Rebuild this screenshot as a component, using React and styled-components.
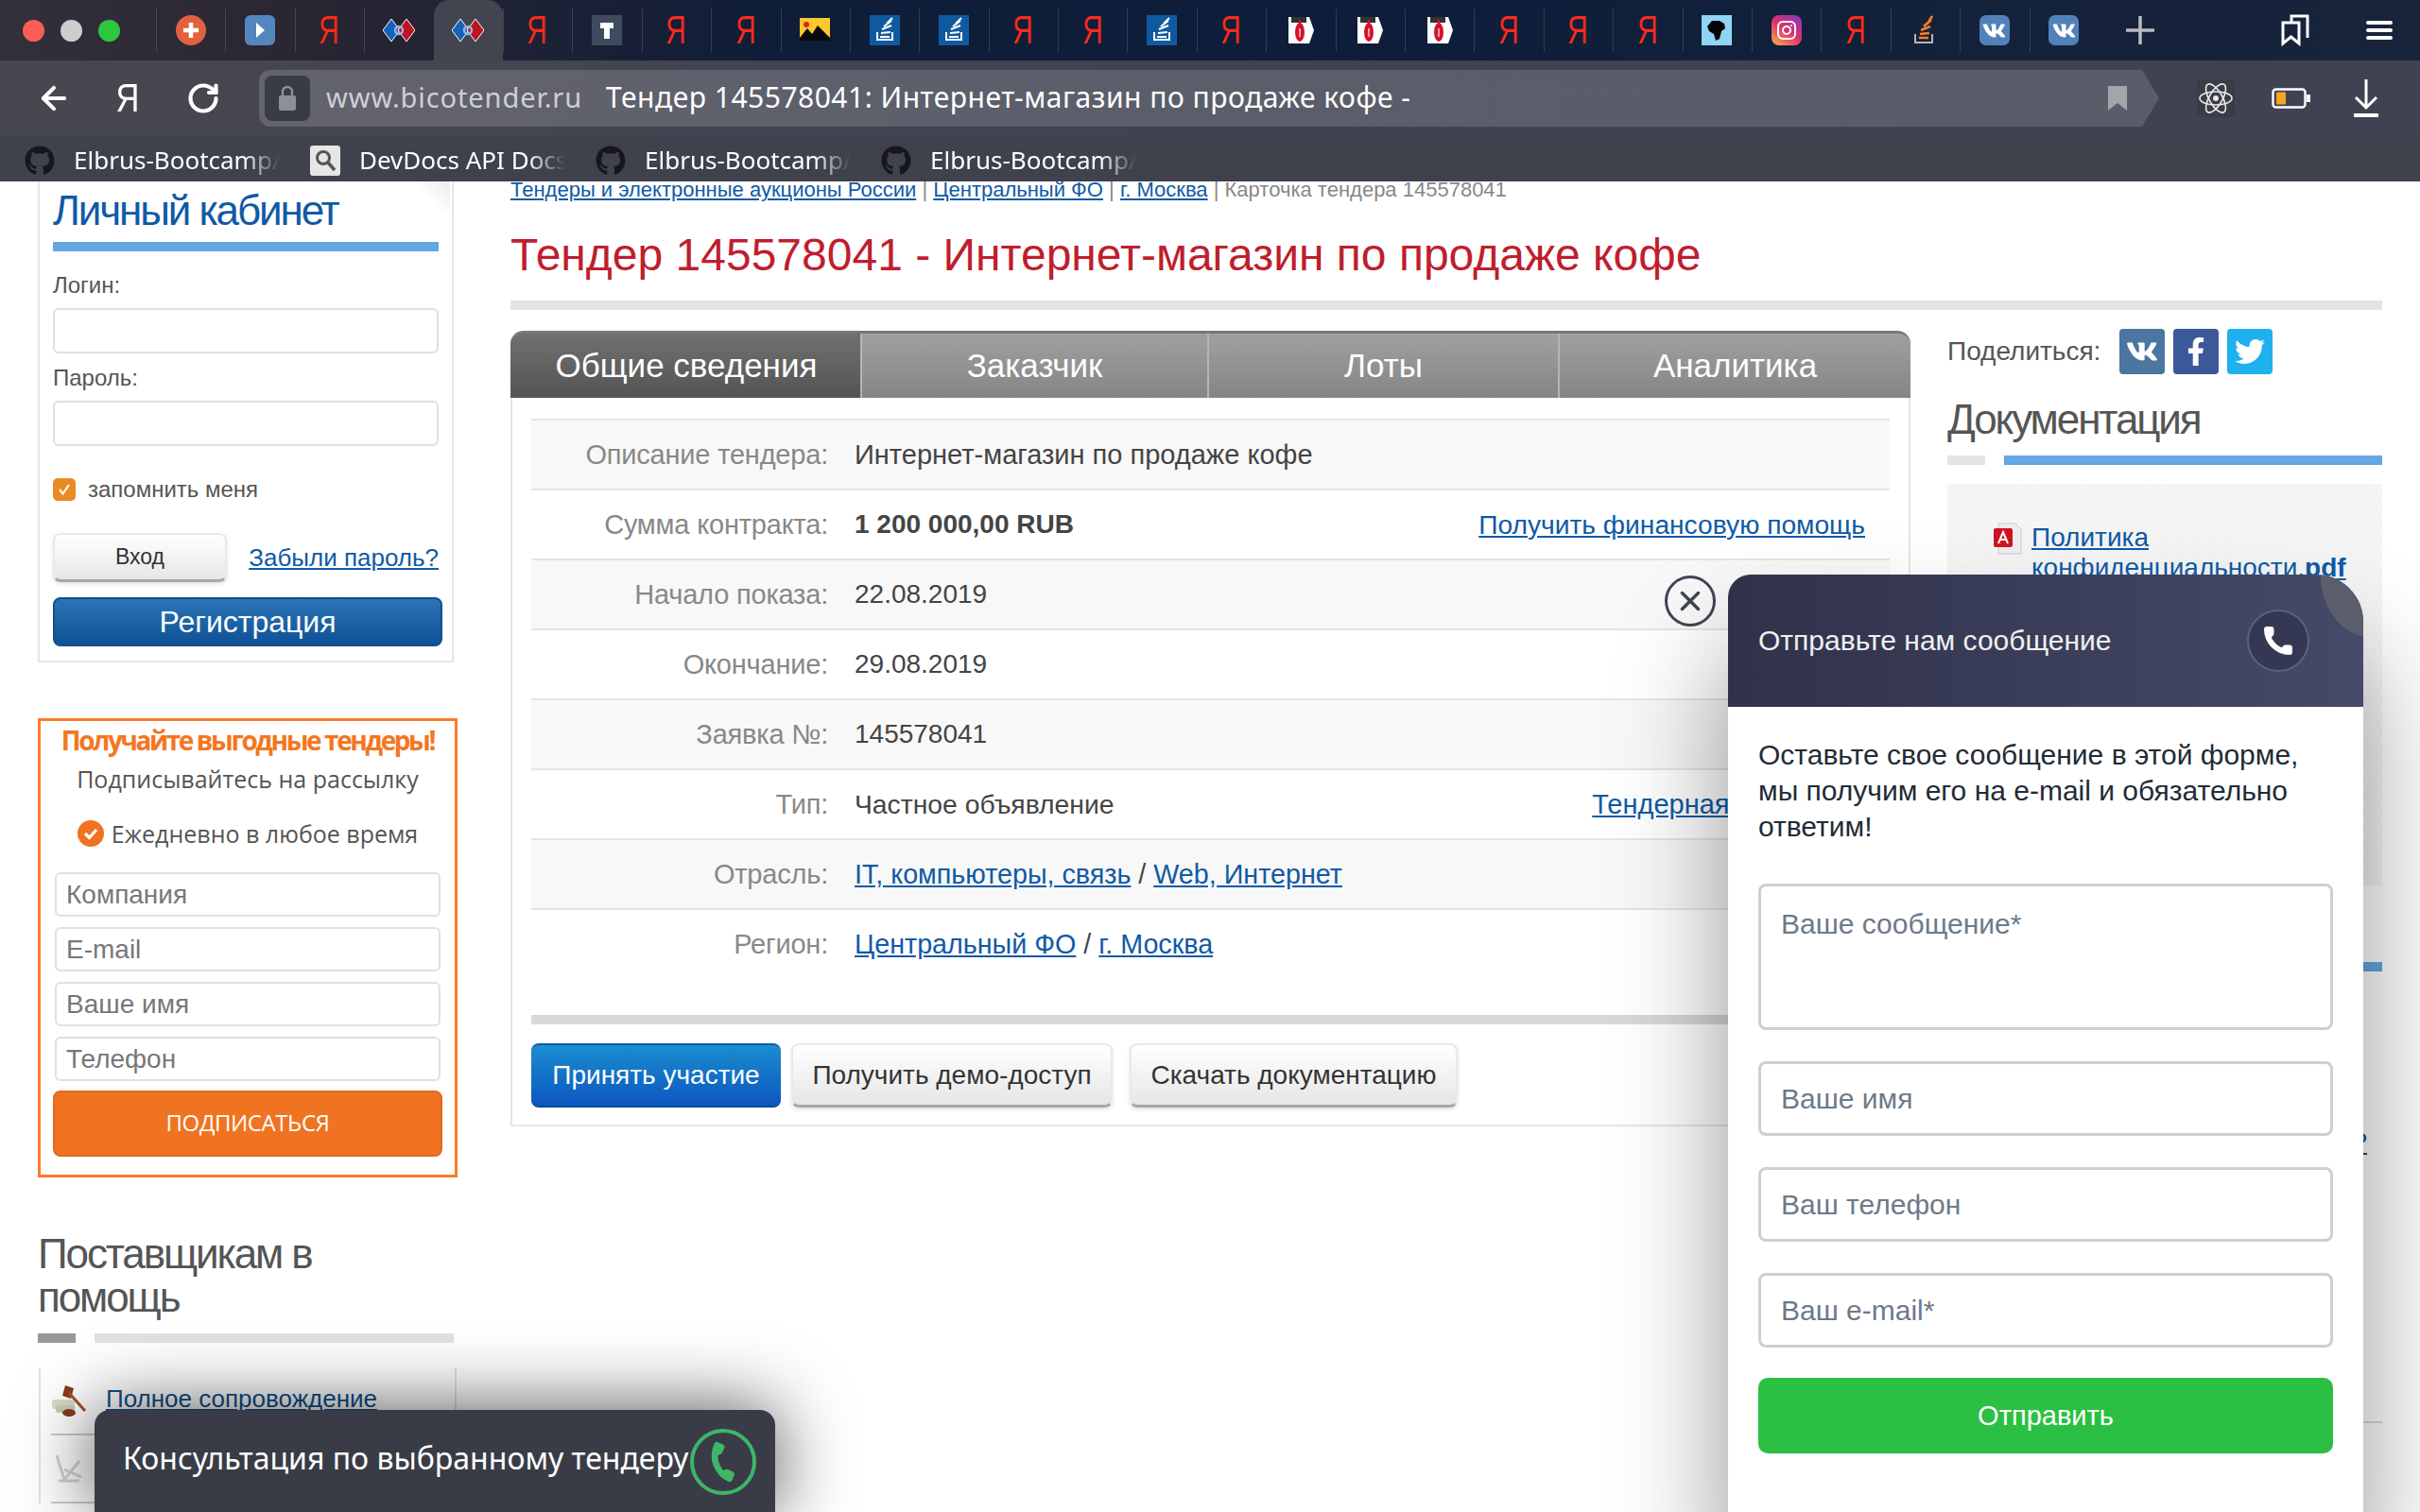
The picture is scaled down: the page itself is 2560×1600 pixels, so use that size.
import styled, { createGlobalStyle } from 'styled-components';
import { FaGithub, FaVk, FaFacebookF, FaTwitter } from 'react-icons/fa';
import { RotateCw, ArrowLeft, X, Phone } from 'lucide-react';

const GlobalStyle = createGlobalStyle`
  * { box-sizing: border-box; }
  html, body { margin: 0; padding: 0; background: #fff; }
  body { font-family: "Liberation Sans", Arial, sans-serif; color: #444; }
  a { color: #0f5aa6; }
  input::placeholder, textarea::placeholder { opacity: 1; color: inherit; }
`;

const tabIcons = [
  'plus', 'play', 'ya', 'bico', 'bico', 'ya', 'tee', 'ya', 'ya', 'photo', 'stack', 'stack', 'ya', 'ya',
  'stack', 'ya', 'pdf', 'pdf', 'pdf', 'ya', 'ya', 'ya', 'bird', 'insta', 'ya', 'so', 'vk', 'vk',
];

const bookmarks = [
  { icon: 'gh', label: 'Elbrus-Bootcamp/' },
  { icon: 'docs', label: 'DevDocs API Docs' },
  { icon: 'gh', label: 'Elbrus-Bootcamp/' },
  { icon: 'gh', label: 'Elbrus-Bootcamp/' },
];

const contentTabs = ['Общие сведения', 'Заказчик', 'Лоты', 'Аналитика'];

const App = () => (
  <Screen>
    <GlobalStyle />
    <BrowserChrome />
    <Viewport>
      <Page>
        <Sidebar />
        <MainColumn>
          <Breadcrumbs>
            <a href="#a">Тендеры и электронные аукционы России</a> <i>|</i> <a href="#a">Центральный ФО</a> <i>|</i>{' '}
            <a href="#a">г. Москва</a> <i>|</i> Карточка тендера 145578041
          </Breadcrumbs>
          <PageTitle>Тендер 145578041 - Интернет-магазин по продаже кофе</PageTitle>
          <TitleBar />
          <ContentRow>
            <TenderPanel />
            <RightColumn />
          </ContentRow>
        </MainColumn>
      </Page>
      <ConsultBar>
        <span>Консультация по выбранному тендеру</span>
        <ConsultPhone>
          <Phone size={40} fill="currentColor" strokeWidth={0} />
        </ConsultPhone>
      </ConsultBar>
      <CloseButton>
        <X size={34} strokeWidth={2.4} />
      </CloseButton>
      <MessagePopup />
    </Viewport>
  </Screen>
);

const BrowserChrome = () => (
  <Chrome>
    <TabStrip>
      <Lights>
        <Light $color="#fc5c57" />
        <Light $color="#cdcdcd" />
        <Light $color="#2cc73f" />
      </Lights>
      {tabIcons.map((kind, i) => (
        <BrowserTab key={i} $active={i === 4}>
          <Favicon kind={kind} />
        </BrowserTab>
      ))}
      <NewTab>
        <svg width="30" height="30" viewBox="0 0 30 30">
          <path d="M15 1v28M1 15h28" stroke="#b9bcc2" strokeWidth="3.5" strokeLinecap="round" />
        </svg>
      </NewTab>
      <StripRight>
        <svg width="30" height="34" viewBox="0 0 30 34" fill="none" stroke="#fff" strokeWidth="3">
          <path d="M11 9V2h17v23" />
          <path d="M2 9h17v22l-8.5-7L2 31z" />
        </svg>
        <MenuBars>
          <b />
          <b />
          <b />
        </MenuBars>
      </StripRight>
    </TabStrip>
    <NavBar>
      <NavButton>
        <ArrowLeft size={38} color="#fff" strokeWidth={2.6} />
      </NavButton>
      <NavLetter>Я</NavLetter>
      <NavButton>
        <RotateCw size={36} color="#fff" strokeWidth={2.8} />
      </NavButton>
      <AddressBar>
        <LockBox>
          <svg width="20" height="28" viewBox="0 0 20 28">
            <path d="M5 12V7a5 5 0 0 1 10 0v5" fill="none" stroke="#8b9097" strokeWidth="2.4" />
            <rect x="1" y="11" width="18" height="16" rx="2" fill="#8b9097" />
          </svg>
        </LockBox>
        <Host>www.bicotender.ru</Host>
        <PageName>Тендер 145578041: Интернет-магазин по продаже кофе -</PageName>
        <AddressBookmark viewBox="0 0 20 26" width="20" height="26">
          <path d="M0 0h20v26l-10-8-10 8z" fill="#a3a5ab" />
        </AddressBookmark>
      </AddressBar>
      <AtomBox>
        <svg width="36" height="36" viewBox="0 0 36 36" fill="none" stroke="#e8e8ea" strokeWidth="1.6">
          <ellipse cx="18" cy="18" rx="17" ry="7" />
          <ellipse cx="18" cy="18" rx="17" ry="7" transform="rotate(60 18 18)" />
          <ellipse cx="18" cy="18" rx="17" ry="7" transform="rotate(120 18 18)" />
          <circle cx="18" cy="18" r="3" fill="#e8e8ea" stroke="none" />
        </svg>
      </AtomBox>
      <svg width="42" height="22" viewBox="0 0 42 22">
        <rect x="1.5" y="1.5" width="34" height="19" rx="3" fill="none" stroke="#fff" strokeWidth="2.4" />
        <rect x="5" y="4.5" width="10" height="13" rx="1" fill="#f5a623" />
        <rect x="37" y="7" width="4" height="8" fill="#fff" />
      </svg>
      <svg width="30" height="40" viewBox="0 0 30 40" fill="none" stroke="#fff" strokeWidth="3">
        <path d="M15 0v30M4 19l11 11 11-11" />
        <path d="M2 38h26" strokeWidth="4" />
      </svg>
    </NavBar>
    <BookmarksBar>
      {bookmarks.map((b, i) => (
        <Bookmark key={i}>
          {b.icon === 'gh' ? (
            <FaGithub size={32} color="#17171b" />
          ) : (
            <svg width="32" height="32" viewBox="0 0 32 32">
              <rect width="32" height="32" rx="3" fill="#e6e6e6" />
              <circle cx="14" cy="13" r="6.5" fill="none" stroke="#555" strokeWidth="3" />
              <path d="M19 18l7 8" stroke="#555" strokeWidth="3.5" />
            </svg>
          )}
          <BookmarkLabel>{b.label}</BookmarkLabel>
        </Bookmark>
      ))}
    </BookmarksBar>
  </Chrome>
);

const Favicon = ({ kind }) => {
  if (kind === 'ya') return <YaMark>Я</YaMark>;
  if (kind === 'plus')
    return (
      <svg width="32" height="32" viewBox="0 0 32 32">
        <circle cx="16" cy="16" r="16" fill="#e2623f" />
        <path d="M16 8v16M8 16h16" stroke="#fff" strokeWidth="4.5" />
      </svg>
    );
  if (kind === 'play')
    return (
      <svg width="32" height="32" viewBox="0 0 32 32">
        <rect width="32" height="32" rx="6" fill="#5585bd" />
        <path d="M12 8l9 8-9 8z" fill="#fff" />
      </svg>
    );
  if (kind === 'bico')
    return (
      <svg width="34" height="24" viewBox="0 0 34 24">
        <path d="M9 0l9 12-9 12-9-12z" fill="#1662b8" stroke="#fff" strokeWidth="1" />
        <path d="M25 0l9 12-9 12-9-12z" fill="#bd1424" stroke="#fff" strokeWidth="1" />
        <circle cx="17" cy="12" r="4" fill="none" stroke="#8fb7e6" strokeWidth="2.4" />
      </svg>
    );
  if (kind === 'tee')
    return (
      <svg width="32" height="32" viewBox="0 0 32 32">
        <rect width="32" height="32" fill="#3e4a5e" />
        <path d="M9 8h14v6h-4v11h-6V14H9z" fill="#fff" />
      </svg>
    );
  if (kind === 'photo')
    return (
      <svg width="32" height="32" viewBox="0 0 32 32">
        <rect y="3" width="32" height="24" fill="#fdc72e" />
        <circle cx="7" cy="10" r="3" fill="#d9241c" />
        <path d="M0 24l8-10 5 6 6-9 13 13v3H0z" fill="#0a0a0a" />
      </svg>
    );
  if (kind === 'stack')
    return (
      <svg width="32" height="32" viewBox="0 0 32 32">
        <rect width="32" height="32" fill="#0f5a9e" />
        <path d="M8 18v8h16v-8" fill="none" stroke="#fff" strokeWidth="2" />
        <path d="M11 23h10M12 19l10-1M13 15l10-4M15 12l8-6M18 9l6-6" stroke="#fff" strokeWidth="2" />
      </svg>
    );
  if (kind === 'so')
    return (
      <svg width="32" height="32" viewBox="0 0 32 32">
        <path d="M6 20v9h18v-9" fill="none" stroke="#b5b5b5" strokeWidth="2" />
        <path d="M10 24h10M11 20l10-1M12 16l10-4M15 12l8-7M19 9l5-8" stroke="#f48024" strokeWidth="2.6" />
      </svg>
    );
  if (kind === 'pdf')
    return (
      <svg width="30" height="30" viewBox="0 0 30 30">
        <path d="M2 1h22l5 14-5 14H2z" fill="#fff" />
        <path d="M5 1h16v6H5z" fill="#333" />
        <path d="M13 4h2v6h-2z" fill="#d5122a" />
        <ellipse cx="14" cy="17" rx="5" ry="10" fill="#d5122a" />
        <path d="M13 13h2v9h-2z" fill="#fff" opacity=".6" />
      </svg>
    );
  if (kind === 'bird')
    return (
      <svg width="32" height="32" viewBox="0 0 32 32">
        <rect width="32" height="32" fill="#8fd3f5" />
        <path d="M6 12l5-6 8 0 5 3 1 5-4 3-2 8-4 2-2-7-5-3z" fill="#050505" />
      </svg>
    );
  if (kind === 'insta')
    return (
      <InstaIcon>
        <svg width="22" height="22" viewBox="0 0 22 22" fill="none" stroke="#fff" strokeWidth="2">
          <rect x="2" y="2" width="18" height="18" rx="5" />
          <circle cx="11" cy="11" r="4" />
          <circle cx="16" cy="6" r="1" fill="#fff" stroke="none" />
        </svg>
      </InstaIcon>
    );
  return (
    <VkIcon>
      <FaVk size={25} color="#fff" />
    </VkIcon>
  );
};

const Sidebar = () => (
  <SideColumn>
    <LoginBox>
      <LoginTitle>Личный кабинет</LoginTitle>
      <BlueRule />
      <FieldLabel>Логин:</FieldLabel>
      <SideInput />
      <FieldLabel $gap={12}>Пароль:</FieldLabel>
      <SideInput />
      <RememberRow>
        <CheckMark>
          <svg width="14" height="14" viewBox="0 0 14 14">
            <path d="M2 7l3.5 4.5L12 2" fill="none" stroke="#fff" strokeWidth="2.2" />
          </svg>
        </CheckMark>
        запомнить меня
      </RememberRow>
      <LoginActions>
        <GreyButton $width={184} $height={52} $size={23}>
          Вход
        </GreyButton>
        <ForgotLink href="#a">Забыли пароль?</ForgotLink>
      </LoginActions>
      <RegisterButton>Регистрация</RegisterButton>
    </LoginBox>

    <SubscribeBox>
      <SubscribeTitle>Получайте выгодные тендеры!</SubscribeTitle>
      <SubscribeLine>Подписывайтесь на рассылку</SubscribeLine>
      <ScheduleLine>
        <svg width="28" height="28" viewBox="0 0 28 28">
          <circle cx="14" cy="14" r="14" fill="#f07322" />
          <path d="M8 14l4.5 4.5L20 10" fill="none" stroke="#fff" strokeWidth="3.2" />
        </svg>
        Ежедневно в любое время
      </ScheduleLine>
      <SubscribeFields>
        <SubscribeInput placeholder="Компания" />
        <SubscribeInput placeholder="E-mail" />
        <SubscribeInput placeholder="Ваше имя" />
        <SubscribeInput placeholder="Телефон" />
      </SubscribeFields>
      <SubscribeButton>ПОДПИСАТЬСЯ</SubscribeButton>
    </SubscribeBox>

    <HelpHeading>
      Поставщикам в
      <br />
      помощь
    </HelpHeading>
    <SplitRule $short="#999" $long="#e2e2e2" $gap={20} $shortWidth={40} $width={440} />
    <HelpList>
      <HelpItem>
        <svg width="38" height="34" viewBox="0 0 38 34">
          <rect x="1" y="16" width="24" height="10" rx="3" fill="#d9d9c8" />
          <rect x="5" y="22" width="20" height="8" rx="3" fill="#c9cbb8" />
          <ellipse cx="19" cy="30" rx="7" ry="4" fill="#8a3d1f" />
          <path d="M15 1l9 3-3 11-9-3z" fill="#8a3d1f" />
          <path d="M19 9l17 19" stroke="#a0522d" strokeWidth="3" />
        </svg>
        <a href="#a">Полное сопровождение</a>
      </HelpItem>
      <HelpItem>
        <svg width="38" height="34" viewBox="0 0 38 34" fill="none" stroke="#d4d4d4" strokeWidth="3">
          <path d="M6 3l8 26M14 29l16-20M14 18l18 8M8 30h22" />
        </svg>
      </HelpItem>
    </HelpList>
  </SideColumn>
);

const TenderPanel = () => (
  <Panel>
    <PanelTabs>
      {contentTabs.map((t, i) => (
        <PanelTab key={t} $active={i === 0}>
          {t}
        </PanelTab>
      ))}
    </PanelTabs>
    <PanelBody>
      <InfoRow label="Описание тендера:" shade>
        Интернет-магазин по продаже кофе
      </InfoRow>
      <InfoRow label="Сумма контракта:" aside="Получить финансовую помощь" asideSize={28.2} valueSize={28}>
        <strong>1 200 000,00 RUB</strong>
      </InfoRow>
      <InfoRow label="Начало показа:" shade valueSize={28}>
        22.08.2019
      </InfoRow>
      <InfoRow label="Окончание:" valueSize={28}>
        29.08.2019
      </InfoRow>
      <InfoRow label="Заявка №:" shade valueSize={28}>
        145578041
      </InfoRow>
      <InfoRow label="Тип:" aside="Тендерная площадка" asideSize={29} valueSize={28.3}>
        Частное объявление
      </InfoRow>
      <InfoRow label="Отрасль:" shade valueSize={28.7}>
        <a href="#a">IT, компьютеры, связь</a> / <a href="#a">Web, Интернет</a>
      </InfoRow>
      <InfoRow label="Регион:" valueSize={28.7}>
        <a href="#a">Центральный ФО</a> / <a href="#a">г. Москва</a>
      </InfoRow>
      <ThickRule />
      <PanelActions>
        <BlueButton>Принять участие</BlueButton>
        <GreyButton $width={340} $height={68} $size={28}>
          Получить демо-доступ
        </GreyButton>
        <GreyButton $width={347} $height={68} $size={28} $gap={7}>
          Скачать документацию
        </GreyButton>
      </PanelActions>
    </PanelBody>
  </Panel>
);

const InfoRow = ({ label, aside, asideSize, valueSize = 29, shade, children }) => (
  <RowBox $shade={shade}>
    <RowLabel>{label}</RowLabel>
    <RowValue $size={valueSize}>{children}</RowValue>
    {aside && (
      <RowAside href="#a" $size={asideSize}>
        {aside}
      </RowAside>
    )}
  </RowBox>
);

const RightColumn = () => (
  <SideDocs>
    <ShareRow>
      <span>Поделиться:</span>
      <ShareIcons>
        <ShareIcon $color="#4a76a0">
          <FaVk size={34} />
        </ShareIcon>
        <ShareIcon $color="#3b5998">
          <FaFacebookF size={30} />
        </ShareIcon>
        <ShareIcon $color="#1fb0ee">
          <FaTwitter size={32} />
        </ShareIcon>
      </ShareIcons>
    </ShareRow>
    <DocsHeading>Документация</DocsHeading>
    <SplitRule $short="#e3e3e3" $long="#65a6e4" $gap={20} $shortWidth={40} />
    <DocsBox>
      <PdfIcon>
        <svg width="32" height="34" viewBox="0 0 32 34">
          <path d="M6 1h18l6 6v26H6z" fill="#eee" stroke="#ccc" />
          <rect x="1" y="6" width="20" height="20" rx="2" fill="#cf1322" />
          <path d="M6 22l5-12 5 12M8 18h6" fill="none" stroke="#fff" strokeWidth="2" />
        </svg>
      </PdfIcon>
      <DocLink href="#a">
        Политика конфиденциальности.<b>pdf</b>
      </DocLink>
    </DocsBox>
    <SplitRule $short="#e3e3e3" $long="#65a6e4" $gap={20} $shortWidth={40} $top={81} />
    <TrailingLink href="#a">?</TrailingLink>
    <TrailingRule />
  </SideDocs>
);

const MessagePopup = () => (
  <Popup>
    <PopupHeader>
      <PopupCorner />
      <span>Отправьте нам сообщение</span>
      <PopupPhone>
        <Phone size={36} fill="currentColor" strokeWidth={0} />
      </PopupPhone>
    </PopupHeader>
    <PopupBody>
      <PopupIntro>
        Оставьте свое сообщение в этой форме,
        <br />
        мы получим его на e-mail и обязательно
        <br />
        ответим!
      </PopupIntro>
      <PopupTextarea placeholder="Ваше сообщение*" />
      <PopupInput placeholder="Ваше имя" />
      <PopupInput placeholder="Ваш телефон" />
      <PopupInput placeholder="Ваш e-mail*" />
      <SendButton>Отправить</SendButton>
    </PopupBody>
  </Popup>
);

export default App;

const Screen = styled.div`
  width: 2560px;
  height: 1600px;
  display: flex;
  flex-direction: column;
  overflow: hidden;
  background: #fff;
`;

const Chrome = styled.header`
  flex: 0 0 192px;
  display: flex;
  flex-direction: column;
  position: relative;
  z-index: 5;
`;

const TabStrip = styled.div`
  height: 64px;
  display: flex;
  align-items: stretch;
  background: linear-gradient(90deg, #33303a 0%, #2a2632 12%, #0f1d38 32%, #0e1e3a 60%, #18243a 100%);
`;

const Lights = styled.div`
  width: 165px;
  padding-left: 24px;
  display: flex;
  align-items: center;
  gap: 17px;
`;

const Light = styled.span`
  width: 23px;
  height: 23px;
  border-radius: 50%;
  background: ${(p) => p.$color};
`;

const BrowserTab = styled.div`
  flex: 0 0 73.4px;
  display: flex;
  align-items: center;
  justify-content: center;
  position: relative;
  border-radius: ${(p) => (p.$active ? '16px 16px 0 0' : '0')};
  background: ${(p) => (p.$active ? '#42444f' : 'transparent')};
  &::before {
    content: '';
    position: absolute;
    left: 0;
    top: 9px;
    bottom: 9px;
    width: 1px;
    background: rgba(255, 255, 255, ${(p) => (p.$active ? 0 : 0.14)});
  }
`;

const NewTab = styled.div`
  flex: 0 0 88px;
  display: flex;
  align-items: center;
  justify-content: center;
`;

const StripRight = styled.div`
  margin-left: auto;
  display: flex;
  align-items: center;
  gap: 60px;
  padding-right: 29px;
`;

const MenuBars = styled.div`
  display: flex;
  flex-direction: column;
  gap: 4px;
  b {
    display: block;
    width: 28px;
    height: 4px;
    border-radius: 2px;
    background: #fff;
  }
`;

const YaMark = styled.span`
  display: inline-block;
  font-size: 42px;
  line-height: 1;
  color: #fc2a1c;
  transform: scaleX(0.72);
`;

const InstaIcon = styled.div`
  width: 32px;
  height: 32px;
  border-radius: 8px;
  display: flex;
  align-items: center;
  justify-content: center;
  background: linear-gradient(35deg, #fcb045 0%, #e1306c 50%, #7d3ac1 100%);
`;

const VkIcon = styled.div`
  width: 32px;
  height: 32px;
  border-radius: 7px;
  display: flex;
  align-items: center;
  justify-content: center;
  background: #5181b8;
`;

const NavBar = styled.div`
  height: 80px;
  display: flex;
  align-items: center;
  padding: 0 40px 0 38px;
  background: linear-gradient(90deg, #47474f 0%, #3e4352 50%, #3f4351 100%);
  > svg:nth-last-child(2) {
    margin-left: 39px;
  }
  > svg:last-child {
    margin-left: 43px;
  }
`;

const NavButton = styled.div`
  width: 38px;
  display: flex;
  justify-content: center;
`;

const NavLetter = styled.span`
  display: inline-block;
  width: 40px;
  margin: 0 41px 0 39px;
  text-align: center;
  font-size: 42px;
  color: #fff;
  transform: scaleX(0.82);
`;

const AddressBar = styled.div`
  width: 2010px;
  height: 60px;
  margin-left: 40px;
  display: flex;
  align-items: center;
  padding-left: 6px;
  border-radius: 12px 0 0 12px;
  clip-path: polygon(0 0, calc(100% - 18px) 0, 100% 50%, calc(100% - 18px) 100%, 0 100%);
  background: linear-gradient(90deg, #63636e 0%, #5a5e6a 50%, #5a5d69 100%);
  font-family: "Noto Sans", sans-serif;
  font-size: 29px;
  white-space: nowrap;
`;

const LockBox = styled.div`
  width: 48px;
  height: 48px;
  border-radius: 8px;
  background: #393c46;
  display: flex;
  align-items: center;
  justify-content: center;
`;

const Host = styled.span`
  margin: 0 0 3px 17px;
  color: #cfd0d4;
  letter-spacing: 0.9px;
`;

const PageName = styled.span`
  margin: 0 0 3px 25px;
  color: #fff;
  font-size: 30px;
  letter-spacing: 0.5px;
`;

const AddressBookmark = styled.svg`
  margin-left: auto;
  margin-right: 34px;
`;

const AtomBox = styled.div`
  width: 40px;
  height: 40px;
  margin-left: 40px;
  border-radius: 4px;
  display: flex;
  align-items: center;
  justify-content: center;
  background: #3a3c47;
`;

const BookmarksBar = styled.div`
  height: 48px;
  display: flex;
  align-items: center;
  padding-left: 26px;
  padding-top: 3px;
  background: #3f414c;
`;

const Bookmark = styled.div`
  width: 302px;
  display: flex;
  align-items: center;
  gap: 20px;
`;

const BookmarkLabel = styled.span`
  width: 218px;
  margin-bottom: 2px;
  overflow: hidden;
  white-space: nowrap;
  color: #fff;
  font-family: "Noto Sans", sans-serif;
  font-size: 26px;
  -webkit-mask-image: linear-gradient(90deg, #000 82%, transparent 100%);
  mask-image: linear-gradient(90deg, #000 82%, transparent 100%);
`;

const Viewport = styled.main`
  flex: 1;
  position: relative;
  overflow: hidden;
`;

const Page = styled.div`
  display: flex;
  align-items: flex-start;
  padding-left: 40px;
`;

const SideColumn = styled.aside`
  width: 444px;
  flex: none;
  display: flex;
  flex-direction: column;
`;

const LoginBox = styled.section`
  width: 440px;
  height: 509px;
  padding: 6px 14px 0;
  position: relative;
  border: 2px solid #e6e6e6;
  border-top: 0;
  &::after {
    content: '';
    position: absolute;
    top: 0;
    right: 2px;
    width: 36px;
    height: 30px;
    background: linear-gradient(225deg, #ececec 0%, rgba(255, 255, 255, 0) 65%);
  }
`;

const LoginTitle = styled.h2`
  margin: 0 0 8px;
  font-size: 44px;
  line-height: 50px;
  font-weight: 400;
  letter-spacing: -2.1px;
  color: #0f5aa6;
  white-space: nowrap;
`;

const BlueRule = styled.div`
  width: 408px;
  height: 10px;
  background: #65a6e4;
`;

const FieldLabel = styled.div`
  margin: ${(p) => p.$gap ?? 22}px 0 10px;
  font-size: 24px;
  line-height: 28px;
  color: #555;
`;

const SideInput = styled.input`
  display: block;
  width: 408px;
  height: 48px;
  background: #fff;
  border: 2px solid #e0e0e0;
  border-radius: 6px;
`;

const RememberRow = styled.div`
  margin-top: 34px;
  height: 24px;
  display: flex;
  align-items: center;
  gap: 13px;
  font-size: 24px;
  color: #555;
`;

const CheckMark = styled.span`
  width: 24px;
  height: 24px;
  border-radius: 5px;
  display: flex;
  align-items: center;
  justify-content: center;
  background: #ea8a25;
`;

const LoginActions = styled.div`
  margin-top: 34px;
  width: 408px;
  display: flex;
  align-items: center;
  justify-content: space-between;
`;

const GreyButton = styled.button`
  width: ${(p) => p.$width}px;
  height: ${(p) => p.$height}px;
  margin-left: ${(p) => p.$gap ?? 0}px;
  flex: none;
  padding: 0;
  font-family: inherit;
  font-size: ${(p) => p.$size}px;
  color: #333;
  border: 2px solid #e9e9e9;
  border-bottom: 3px solid #a8a8a8;
  border-radius: 8px;
  background: linear-gradient(#fff, #e6e6e6);
  box-shadow: 0 2px 4px rgba(0, 0, 0, 0.12);
`;

const ForgotLink = styled.a`
  font-size: 26px;
  white-space: nowrap;
`;

const RegisterButton = styled.button`
  display: block;
  width: 412px;
  height: 52px;
  margin-top: 16px;
  padding: 0;
  font-family: inherit;
  font-size: 32px;
  color: #fff;
  border: 2px solid #0f4f8f;
  border-radius: 8px;
  background: linear-gradient(#2c74b6, #0d5296);
`;

const SubscribeBox = styled.section`
  width: 444px;
  height: 486px;
  margin-top: 59px;
  padding-top: 3px;
  display: flex;
  flex-direction: column;
  align-items: center;
  border: 3px solid #ff7a2d;
`;

const SubscribeTitle = styled.div`
  font-family: "Open Sans", sans-serif;
  font-size: 28px;
  line-height: 34px;
  font-weight: 700;
  letter-spacing: -2.4px;
  color: #f4761f;
  white-space: nowrap;
`;

const SubscribeLine = styled.div`
  margin-top: 8px;
  font-family: "Open Sans", sans-serif;
  font-size: 25px;
  line-height: 32px;
  color: #555;
  white-space: nowrap;
`;

const ScheduleLine = styled.div`
  margin-top: 26px;
  display: flex;
  align-items: center;
  gap: 8px;
  font-family: "Open Sans", sans-serif;
  font-size: 25px;
  line-height: 32px;
  color: #555;
  white-space: nowrap;
`;

const SubscribeFields = styled.div`
  margin-top: 25px;
  display: flex;
  flex-direction: column;
  gap: 11px;
`;

const SubscribeInput = styled.input`
  display: block;
  width: 408px;
  height: 47px;
  padding: 0 10px;
  font-family: inherit;
  font-size: 28px;
  color: #777;
  background: #fff;
  border: 2px solid #e0e0e0;
  border-radius: 6px;
`;

const SubscribeButton = styled.button`
  width: 412px;
  height: 70px;
  margin-top: 10px;
  padding: 0 0 3px;
  font-family: "Open Sans", sans-serif;
  font-size: 24px;
  letter-spacing: -0.4px;
  color: #fff;
  border: 2px solid #df6a1d;
  border-radius: 8px;
  background: #f07322;
`;

const HelpHeading = styled.h2`
  margin: 58px 0 15px;
  font-size: 44px;
  line-height: 46px;
  font-weight: 400;
  letter-spacing: -2.1px;
  color: #555;
`;

const SplitRule = styled.div`
  display: flex;
  gap: ${(p) => p.$gap}px;
  width: ${(p) => (p.$width ? `${p.$width}px` : 'auto')};
  margin-top: ${(p) => p.$top ?? 0}px;
  height: 10px;
  &::before {
    content: '';
    flex: 0 0 ${(p) => p.$shortWidth}px;
    background: ${(p) => p.$short};
  }
  &::after {
    content: '';
    flex: 1;
    background: ${(p) => p.$long};
  }
`;

const HelpList = styled.ul`
  list-style: none;
  width: 442px;
  margin: 26px 0 0 1px;
  padding: 0 0 0 11px;
  border-left: 2px solid #e3e3e3;
  border-right: 2px solid #e3e3e3;
`;

const HelpItem = styled.li`
  height: 72px;
  display: flex;
  align-items: center;
  gap: 20px;
  font-size: 26px;
  border-bottom: 2px solid #ccc;
  a {
    color: #0f4f8f;
    margin-top: -3px;
  }
`;

const MainColumn = styled.div`
  width: 1980px;
  margin-left: 56px;
  flex: none;
`;

const Breadcrumbs = styled.div`
  margin-top: -3px;
  font-size: 22px;
  line-height: 24px;
  color: #888;
  white-space: nowrap;
  i {
    font-style: normal;
  }
`;

const PageTitle = styled.h1`
  margin: 29px 0 20px;
  font-size: 48px;
  line-height: 56px;
  font-weight: 400;
  color: #bf1e2e;
  white-space: nowrap;
`;

const TitleBar = styled.div`
  height: 10px;
  background: #e3e3e3;
`;

const ContentRow = styled.div`
  display: flex;
  align-items: flex-start;
  gap: 39px;
  margin-top: 22px;
`;

const Panel = styled.section`
  width: 1481px;
  flex: none;
  border: 2px solid #e5e5e5;
  border-top: 0;
  border-radius: 14px 14px 0 0;
`;

const PanelTabs = styled.div`
  display: grid;
  grid-template-columns: 370px 367px 371px 1fr;
  height: 71px;
  margin: 0 -2px;
  overflow: hidden;
  border-radius: 14px 14px 0 0;
  border-top: 3px solid #777;
  background: linear-gradient(#a0a0a0, #858585);
`;

const PanelTab = styled.div`
  display: flex;
  align-items: center;
  justify-content: center;
  font-size: 35px;
  color: #fff;
  border-left: 2px solid ${(p) => (p.$active ? 'transparent' : '#b5b5b5')};
  background: ${(p) => (p.$active ? 'linear-gradient(#707070, #545454)' : 'transparent')};
`;

const PanelBody = styled.div`
  padding: 22px 20px 18px;
`;

const RowBox = styled.div`
  height: 74px;
  display: flex;
  align-items: center;
  border-top: 2px solid #e5e5e5;
  background: ${(p) => (p.$shade ? '#f8f8f8' : '#fff')};
`;

const RowLabel = styled.span`
  width: 314px;
  flex: none;
  text-align: right;
  font-size: 29px;
  color: #888;
  letter-spacing: -0.2px;
`;

const RowValue = styled.span`
  margin-left: 28px;
  font-size: ${(p) => p.$size}px;
  color: #444;
  white-space: nowrap;
`;

const RowAside = styled.a`
  margin-left: auto;
  margin-right: 26px;
  font-size: ${(p) => p.$size}px;
  white-space: nowrap;
`;

const ThickRule = styled.div`
  height: 10px;
  margin-top: 39px;
  background: #d8d8d8;
`;

const PanelActions = styled.div`
  margin-top: 20px;
  display: flex;
  gap: 11px;
`;

const BlueButton = styled.button`
  width: 264px;
  height: 68px;
  flex: none;
  padding: 0;
  font-family: inherit;
  font-size: 28px;
  color: #fff;
  border: 0;
  border-top: 2px solid #0c5fa8;
  border-bottom: 2px solid #0d4f98;
  border-radius: 8px;
  background: linear-gradient(#1b8dcf, #0c56c0);
`;

const SideDocs = styled.aside`
  width: 460px;
  flex: none;
  margin-top: -2px;
  display: flex;
  flex-direction: column;
`;

const ShareRow = styled.div`
  height: 48px;
  display: flex;
  align-items: center;
  font-size: 28px;
  color: #555;
`;

const ShareIcons = styled.div`
  margin-left: 20px;
  display: flex;
  gap: 9px;
`;

const ShareIcon = styled.div`
  width: 48px;
  height: 48px;
  border-radius: 4px;
  display: flex;
  align-items: center;
  justify-content: center;
  color: #fff;
  background: ${(p) => p.$color};
`;

const DocsHeading = styled.h2`
  margin: 23px 0 13px;
  font-size: 44px;
  line-height: 50px;
  font-weight: 400;
  letter-spacing: -2.1px;
  color: #555;
`;

const DocsBox = styled.div`
  height: 425px;
  margin-top: 20px;
  padding: 41px 20px 0 48px;
  display: flex;
  gap: 9px;
  background: repeating-linear-gradient(45deg, #f3f3f3 0 2px, #f7f7f7 2px 4px);
`;

const PdfIcon = styled.div`
  flex: none;
  line-height: 0;
`;

const DocLink = styled.a`
  font-size: 28px;
  line-height: 32px;
  b {
    font-weight: 700;
  }
`;

const TrailingLink = styled.a`
  margin-top: 165px;
  align-self: flex-end;
  margin-right: 16px;
  font-size: 28px;
  line-height: 32px;
  color: #0f4f8f;
`;

const TrailingRule = styled.div`
  height: 2px;
  margin-top: 279px;
  background: #d9d9d9;
`;

const ConsultBar = styled.div`
  position: absolute;
  left: 100px;
  top: 1300px;
  width: 720px;
  height: 108px;
  padding: 20px 20px 0 30px;
  display: flex;
  justify-content: space-between;
  border-radius: 16px 16px 0 0;
  background: #393c46;
  box-shadow: 0 0 80px rgba(0, 0, 0, 0.7);
  color: #fff;
  font-family: "Noto Sans", sans-serif;
  font-size: 32px;
  white-space: nowrap;
  > span {
    margin-top: 9px;
    line-height: 44px;
  }
`;

const ConsultPhone = styled.div`
  width: 70px;
  height: 70px;
  flex: none;
  margin-left: -2px;
  display: flex;
  align-items: center;
  justify-content: center;
  border: 4px solid #3fb568;
  border-radius: 50%;
  color: #3fb568;
  svg {
    transform: rotate(25deg);
  }
`;

const CloseButton = styled.div`
  position: absolute;
  left: 1761px;
  top: 417px;
  width: 54px;
  height: 54px;
  border: 3px solid #3e4652;
  border-radius: 50%;
  display: flex;
  align-items: center;
  justify-content: center;
  color: #3e4652;
  background: transparent;
`;

const Popup = styled.div`
  position: absolute;
  left: 1828px;
  top: 416px;
  width: 672px;
  height: 1000px;
  background: #fff;
  border-radius: 24px 50px 0 0;
  box-shadow: 0 80px 120px rgba(0, 0, 0, 0.42);
`;

const PopupHeader = styled.div`
  height: 140px;
  padding: 0 57px 0 32px;
  position: relative;
  overflow: hidden;
  display: flex;
  align-items: center;
  justify-content: space-between;
  border-radius: 24px 50px 0 0;
  background: linear-gradient(90deg, #31324a 0%, #444a68 100%);
  color: #eef0f4;
  font-size: 30px;
`;

const PopupCorner = styled.div`
  position: absolute;
  top: -64px;
  right: -60px;
  width: 105px;
  height: 130px;
  border-radius: 50%;
  background: #5a5d6b;
`;

const PopupPhone = styled.div`
  width: 66px;
  height: 66px;
  display: flex;
  align-items: center;
  justify-content: center;
  border: 2px solid #5e6280;
  border-radius: 50%;
  color: #fff;
  background: #353852;
  position: relative;
`;

const PopupBody = styled.div`
  padding: 32px 32px 0;
  display: flex;
  flex-direction: column;
`;

const PopupIntro = styled.p`
  margin: 0;
  font-size: 30px;
  line-height: 38px;
  color: #222b36;
  white-space: nowrap;
`;

const popupField = `
  display: block;
  width: 608px;
  padding: 0 21px;
  font-family: inherit;
  font-size: 30px;
  color: #6c7a89;
  background: #fff;
  border: 3px solid #cfcfcf;
  border-radius: 8px;
  outline: none;
`;

const PopupTextarea = styled.textarea`
  ${popupField}
  height: 155px;
  margin-top: 41px;
  padding-top: 23px;
  resize: none;
`;

const PopupInput = styled.input`
  ${popupField}
  height: 79px;
  margin-top: 33px;
`;

const SendButton = styled.button`
  width: 608px;
  height: 80px;
  margin-top: 32px;
  padding: 0;
  font-family: inherit;
  font-size: 29px;
  color: #fff;
  border: 0;
  border-radius: 10px;
  background: #2bc043;
`;
